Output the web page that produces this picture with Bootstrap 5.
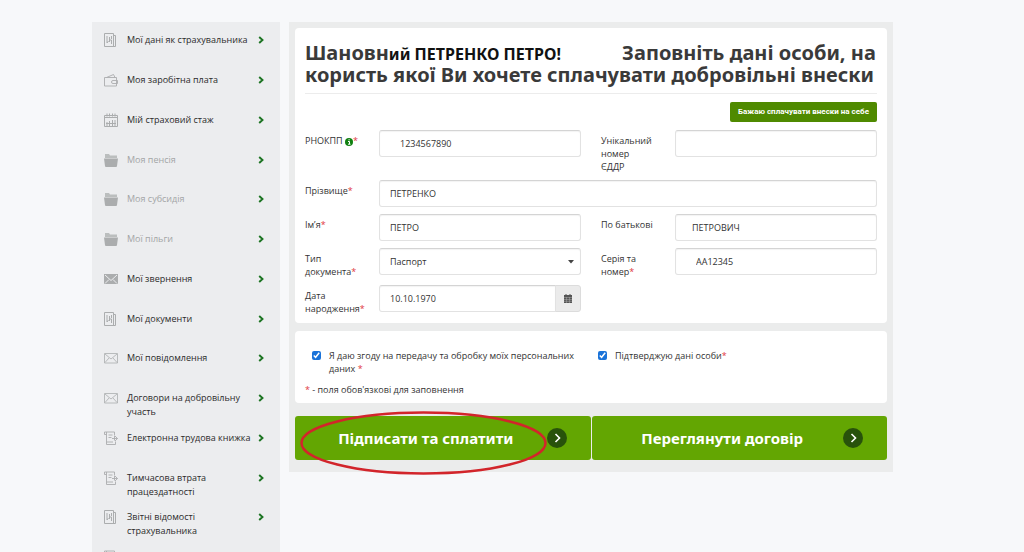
<!DOCTYPE html>
<html lang="uk">
<head>
<meta charset="utf-8">
<meta name="viewport" content="width=device-width, initial-scale=1">
<title>Добровільні внески</title>
<link href="https://cdn.jsdelivr.net/npm/bootstrap@5.3.0/dist/css/bootstrap.min.css" rel="stylesheet">
<style>
body{background:#f7f8fa;font-family:"Open Sans","Noto Sans",sans-serif;font-size:9px;line-height:13px;color:#333}
.page{height:100vh;padding:22px 131px 0 92px;gap:9px}
.side{flex:0 0 188px;background:#ecedef}
.menu{padding:11px 15px 0 12px}
.menu li{height:40px}
.menu li:nth-child(4n){height:39px}
.menu a{display:flex;color:#2b2b2b;text-decoration:none;line-height:14px}
.menu .off{color:#a3a5a6}
.menu .ico{width:14px;height:14px;margin-right:9px;flex:none;color:#abadae}
.menu span{width:128px}
.menu .arr{width:6px;height:14px;margin-left:3px;color:#1c7422;flex:none}
.workspace{min-width:0;background:#ebecec;padding:6px 6px 12px 6px}
.panel{background:#fff;border-radius:4px;padding:0 10px}
.title{font-family:"Noto Sans",sans-serif;font-size:20px;line-height:22px;font-weight:700;color:#3a3a3a;padding:14px 0 7px;border-bottom:1px solid #ececec}
.title .who{font-size:16px;line-height:16px;color:#111;margin-right:56px}
.btn-self{background:#4f8a00;color:#fff;font:700 8px/12px Roboto,sans-serif;padding:4px 8px;border:0;border-radius:2px}
.btn-self:hover{background:#457900;color:#fff}
.fields{row-gap:7px}
.pair{display:grid;grid-template-columns:1fr 1fr;column-gap:20px}
.field{display:grid;grid-template-columns:74px minmax(0,1fr);align-items:start}
.field label{padding:4px 10px 0 0}
.req{color:#e0383e}
.box{height:27px;min-height:0;border:1px solid #e2e2e2;border-top-color:#d4d4d4;border-radius:3px;box-shadow:inset 0 1px 1px #0000000d;font-size:9px;line-height:13px;padding:0 10px;color:#333;background-color:#fff}
select.box{appearance:none;padding-right:20px}
.picker{position:relative}
.caret{right:7px;top:12px;width:6px;height:4px;pointer-events:none}
.in-md{padding-left:16px}
.in-lg{padding-left:20px}
.btn-date{width:26px;height:27px;padding:0;border:1px solid #dcdcdc;border-radius:0 3px 3px 0;background:#ebebeb;display:flex;align-items:center;justify-content:center}
.consent{padding-top:18px;padding-bottom:7px}
.tick{width:9px;height:9px;margin:2px 8px 0 7px;flex:none;accent-color:#1a73d9}
.actions{gap:1px;margin-top:13px}
.btn-big{background:#63a602;color:#fff;height:44px;border:0;border-radius:3px;padding:0 24px 0 10px;font:700 15px/20px "Noto Sans",sans-serif}
.btn-big:hover{background:#589402;color:#fff}
.btn-big svg{width:20px;height:20px;flex:none}
.ring{left:5px;top:-5px;width:247px;height:64px;pointer-events:none}
</style>
</head>
<body>
<svg width="0" height="0" class="position-absolute" aria-hidden="true">
<defs>
<symbol id="doc" viewBox="0 0 14 14"><path d="M.5.5h9v13h-9zM9.500 2.500h2v11h-4M3 3v7M5.500 4v5M3 10l1.500-2M7.500 3v3M5 7h2.500v4" fill="none" stroke="currentColor"/></symbol>
<symbol id="wallet" viewBox="0 0 14 14"><path d="M.5 4.500h12v8.500H.5zM2.500 4.500 9.500 1.500 11 4.500M13.500 7.500H9a1.500 1.500 0 0 0 0 3h4.500z" fill="none" stroke="currentColor" stroke-width=".9"/></symbol>
<symbol id="cal" viewBox="0 0 14 14"><path d="M.5 2.500h13v11H.5zM3 .5v3M5.500 .5v3M8.500 .5v3M11 .5v3M.5 4.500h13M3 9v4M5.500 8v5M8.500 7v6M11 7v6M2 10.500h10" fill="none" stroke="currentColor"/></symbol>
<symbol id="folder" viewBox="0 0 14 14"><path d="M1 1h4l1 1.500h7V5H1z" fill="currentColor" opacity=".75"/><path d="M0 5.500h14L13 13a1 1 0 0 1-1 1H2a1 1 0 0 1-1-1z" fill="currentColor"/></symbol>
<symbol id="mailfull" viewBox="0 0 14 14"><path d="M0 2h14v10H0z" fill="currentColor"/><path d="m1 3 6 5.500L13 3M1 11.500l4-4M13 11.500l-4-4" fill="none" stroke="#ecedef"/></symbol>
<symbol id="mail" viewBox="0 0 14 14"><path d="M.5 2.500h13v9.500H.5zM1 3l6 5 6-5M1 11.500l4-4.500M13 11.500 9 7" fill="none" stroke="currentColor" stroke-width=".8"/></symbol>
<symbol id="scroll" viewBox="0 0 14 14"><path d="M.5 1h10v3M2.500 1v11M2.500 3.500H.5V1M4.500 4h4M4.500 6.500h3M2.500 12v1.500h9v-3M2.500 11h6.500M10.500 4.500v5M8 7.500h5.500M11 5l2.500 2.500L11 10" fill="none" stroke="currentColor" stroke-width=".9"/></symbol>
<symbol id="chev" viewBox="0 0 6 14"><path d="m1.200 4 3.300 3-3.300 3" fill="none" stroke="currentColor" stroke-width="1.900"/></symbol>
<symbol id="go" viewBox="0 0 20 20"><circle cx="10" cy="10" r="10" fill="#28520b"/><path d="m8.500 6 4 4-4 4" fill="none" stroke="#fff" stroke-width="1.600"/></symbol>
</defs>
</svg>
<div class="page d-flex align-items-start overflow-hidden">
<nav class="side align-self-stretch" aria-label="Меню">
<ul class="menu list-unstyled m-0">
<li><a href="#"><svg class="ico"><use href="#doc"/></svg><span>Мої дані як страхувальника</span><svg class="arr"><use href="#chev"/></svg></a></li>
<li><a href="#"><svg class="ico"><use href="#wallet"/></svg><span>Моя заробітна плата</span><svg class="arr"><use href="#chev"/></svg></a></li>
<li><a href="#"><svg class="ico"><use href="#cal"/></svg><span>Мій страховий стаж</span><svg class="arr"><use href="#chev"/></svg></a></li>
<li><a href="#" class="off"><svg class="ico"><use href="#folder"/></svg><span>Моя пенсія</span><svg class="arr"><use href="#chev"/></svg></a></li>
<li><a href="#" class="off"><svg class="ico"><use href="#folder"/></svg><span>Моя субсидія</span><svg class="arr"><use href="#chev"/></svg></a></li>
<li><a href="#" class="off"><svg class="ico"><use href="#folder"/></svg><span>Мої пільги</span><svg class="arr"><use href="#chev"/></svg></a></li>
<li><a href="#"><svg class="ico"><use href="#mailfull"/></svg><span>Мої звернення</span><svg class="arr"><use href="#chev"/></svg></a></li>
<li><a href="#"><svg class="ico"><use href="#doc"/></svg><span>Мої документи</span><svg class="arr"><use href="#chev"/></svg></a></li>
<li><a href="#"><svg class="ico"><use href="#mail"/></svg><span>Мої повідомлення</span><svg class="arr"><use href="#chev"/></svg></a></li>
<li><a href="#"><svg class="ico"><use href="#mail"/></svg><span>Договори на добровільну участь</span><svg class="arr"><use href="#chev"/></svg></a></li>
<li><a href="#"><svg class="ico"><use href="#scroll"/></svg><span>Електронна трудова книжка</span><svg class="arr"><use href="#chev"/></svg></a></li>
<li><a href="#"><svg class="ico"><use href="#scroll"/></svg><span>Тимчасова втрата працездатності</span><svg class="arr"><use href="#chev"/></svg></a></li>
<li><a href="#"><svg class="ico"><use href="#doc"/></svg><span>Звітні відомості страхувальника</span><svg class="arr"><use href="#chev"/></svg></a></li>
<li><a href="#"><svg class="ico"><use href="#scroll"/></svg></a></li>
</ul>
</nav>
<main class="workspace flex-grow-1">
<form>
<section class="panel pb-2">
<h1 class="title m-0">Шановн<span class="who">ий ПЕТРЕНКО ПЕТРО!</span> Заповніть дані особи, на користь якої Ви хочете сплачувати добровільні внески</h1>
<div class="d-flex justify-content-end pt-2 pb-2"><button type="button" class="btn btn-self">Бажаю сплачувати внески на себе</button></div>
<div class="fields d-grid">
<div class="pair">
<div class="field"><label for="code" class="pe-0">РНОКПП <svg width="8" height="8" viewBox="0 0 8 8" aria-hidden="true"><circle cx="4" cy="4" r="4" fill="#108010"/><path d="M3 3.500h1.500V6M3 6.200h2.500M3.500 1.800h1.200" stroke="#fff" fill="none"/></svg><span class="req">*</span></label><input id="code" class="form-control box in-lg" value="1234567890"></div>
<div class="field"><label for="uid">Унікальний номер<br>ЄДДР</label><input id="uid" class="form-control box"></div>
</div>
<div class="field"><label for="last">Прізвище<span class="req">*</span></label><input id="last" class="form-control box" value="ПЕТРЕНКО"></div>
<div class="pair">
<div class="field"><label for="first">Ім’я<span class="req">*</span></label><input id="first" class="form-control box" value="ПЕТРО"></div>
<div class="field"><label for="mid">По батькові</label><input id="mid" class="form-control box in-md" value="ПЕТРОВИЧ"></div>
</div>
<div class="pair">
<div class="field"><label for="kind">Тип документа<span class="req">*</span></label><div class="picker"><select id="kind" class="form-control box"><option>Паспорт</option></select><svg class="caret position-absolute" viewBox="0 0 6 4"><path d="M0 0h6L3 3.500z" fill="#444"/></svg></div></div>
<div class="field"><label for="num">Серія та номер<span class="req">*</span></label><input id="num" class="form-control box in-lg" value="АА12345"></div>
</div>
<div class="pair">
<div class="field"><label for="born">Дата народження<span class="req">*</span></label><div class="input-group flex-nowrap"><input id="born" class="form-control box" value="10.10.1970"><button type="button" class="btn-date" aria-label="Календар"><svg width="8" height="9" viewBox="0 0 8 9"><path d="M0 1h8v8H0z" fill="#555"/><path d="M0 3.500h8M0 5.500h8M0 7.300h8M2.500 3v6M5.500 3v6" stroke="#aaa" stroke-width=".5"/><path d="M2 0v2M6 0v2" stroke="#555"/></svg></button></div></div>
</div>
</div>
</section>
<section class="panel consent mt-2">
<div class="row g-0">
<div class="col-6 d-flex align-items-start pe-2"><input type="checkbox" id="agree" class="tick" checked><label for="agree">Я даю згоду на передачу та обробку моїх персональних даних <span class="req">*</span></label></div>
<div class="col-6 d-flex align-items-start"><input type="checkbox" id="confirm" class="tick" checked><label for="confirm">Підтверджую дані особи<span class="req">*</span></label></div>
</div>
<p class="mt-2 mb-0"><span class="req">*</span> - поля обов'язкові для заповнення</p>
</section>
<div class="actions d-flex position-relative">
<button type="submit" class="btn btn-big d-flex align-items-center w-50"><span class="flex-grow-1">Підписати та сплатити</span><svg><use href="#go"/></svg></button>
<button type="button" class="btn btn-big d-flex align-items-center w-50"><span class="flex-grow-1">Переглянути договір</span><svg><use href="#go"/></svg></button>
<svg class="ring position-absolute" viewBox="0 0 247 64" aria-hidden="true"><ellipse cx="123.500" cy="32" rx="122" ry="30.500" fill="none" stroke="#d2252b" stroke-width="2.500"/></svg>
</div>
</form>
</main>
</div>
<script src="https://cdn.jsdelivr.net/npm/bootstrap@5.3.0/dist/js/bootstrap.bundle.min.js"></script>
</body>
</html>
